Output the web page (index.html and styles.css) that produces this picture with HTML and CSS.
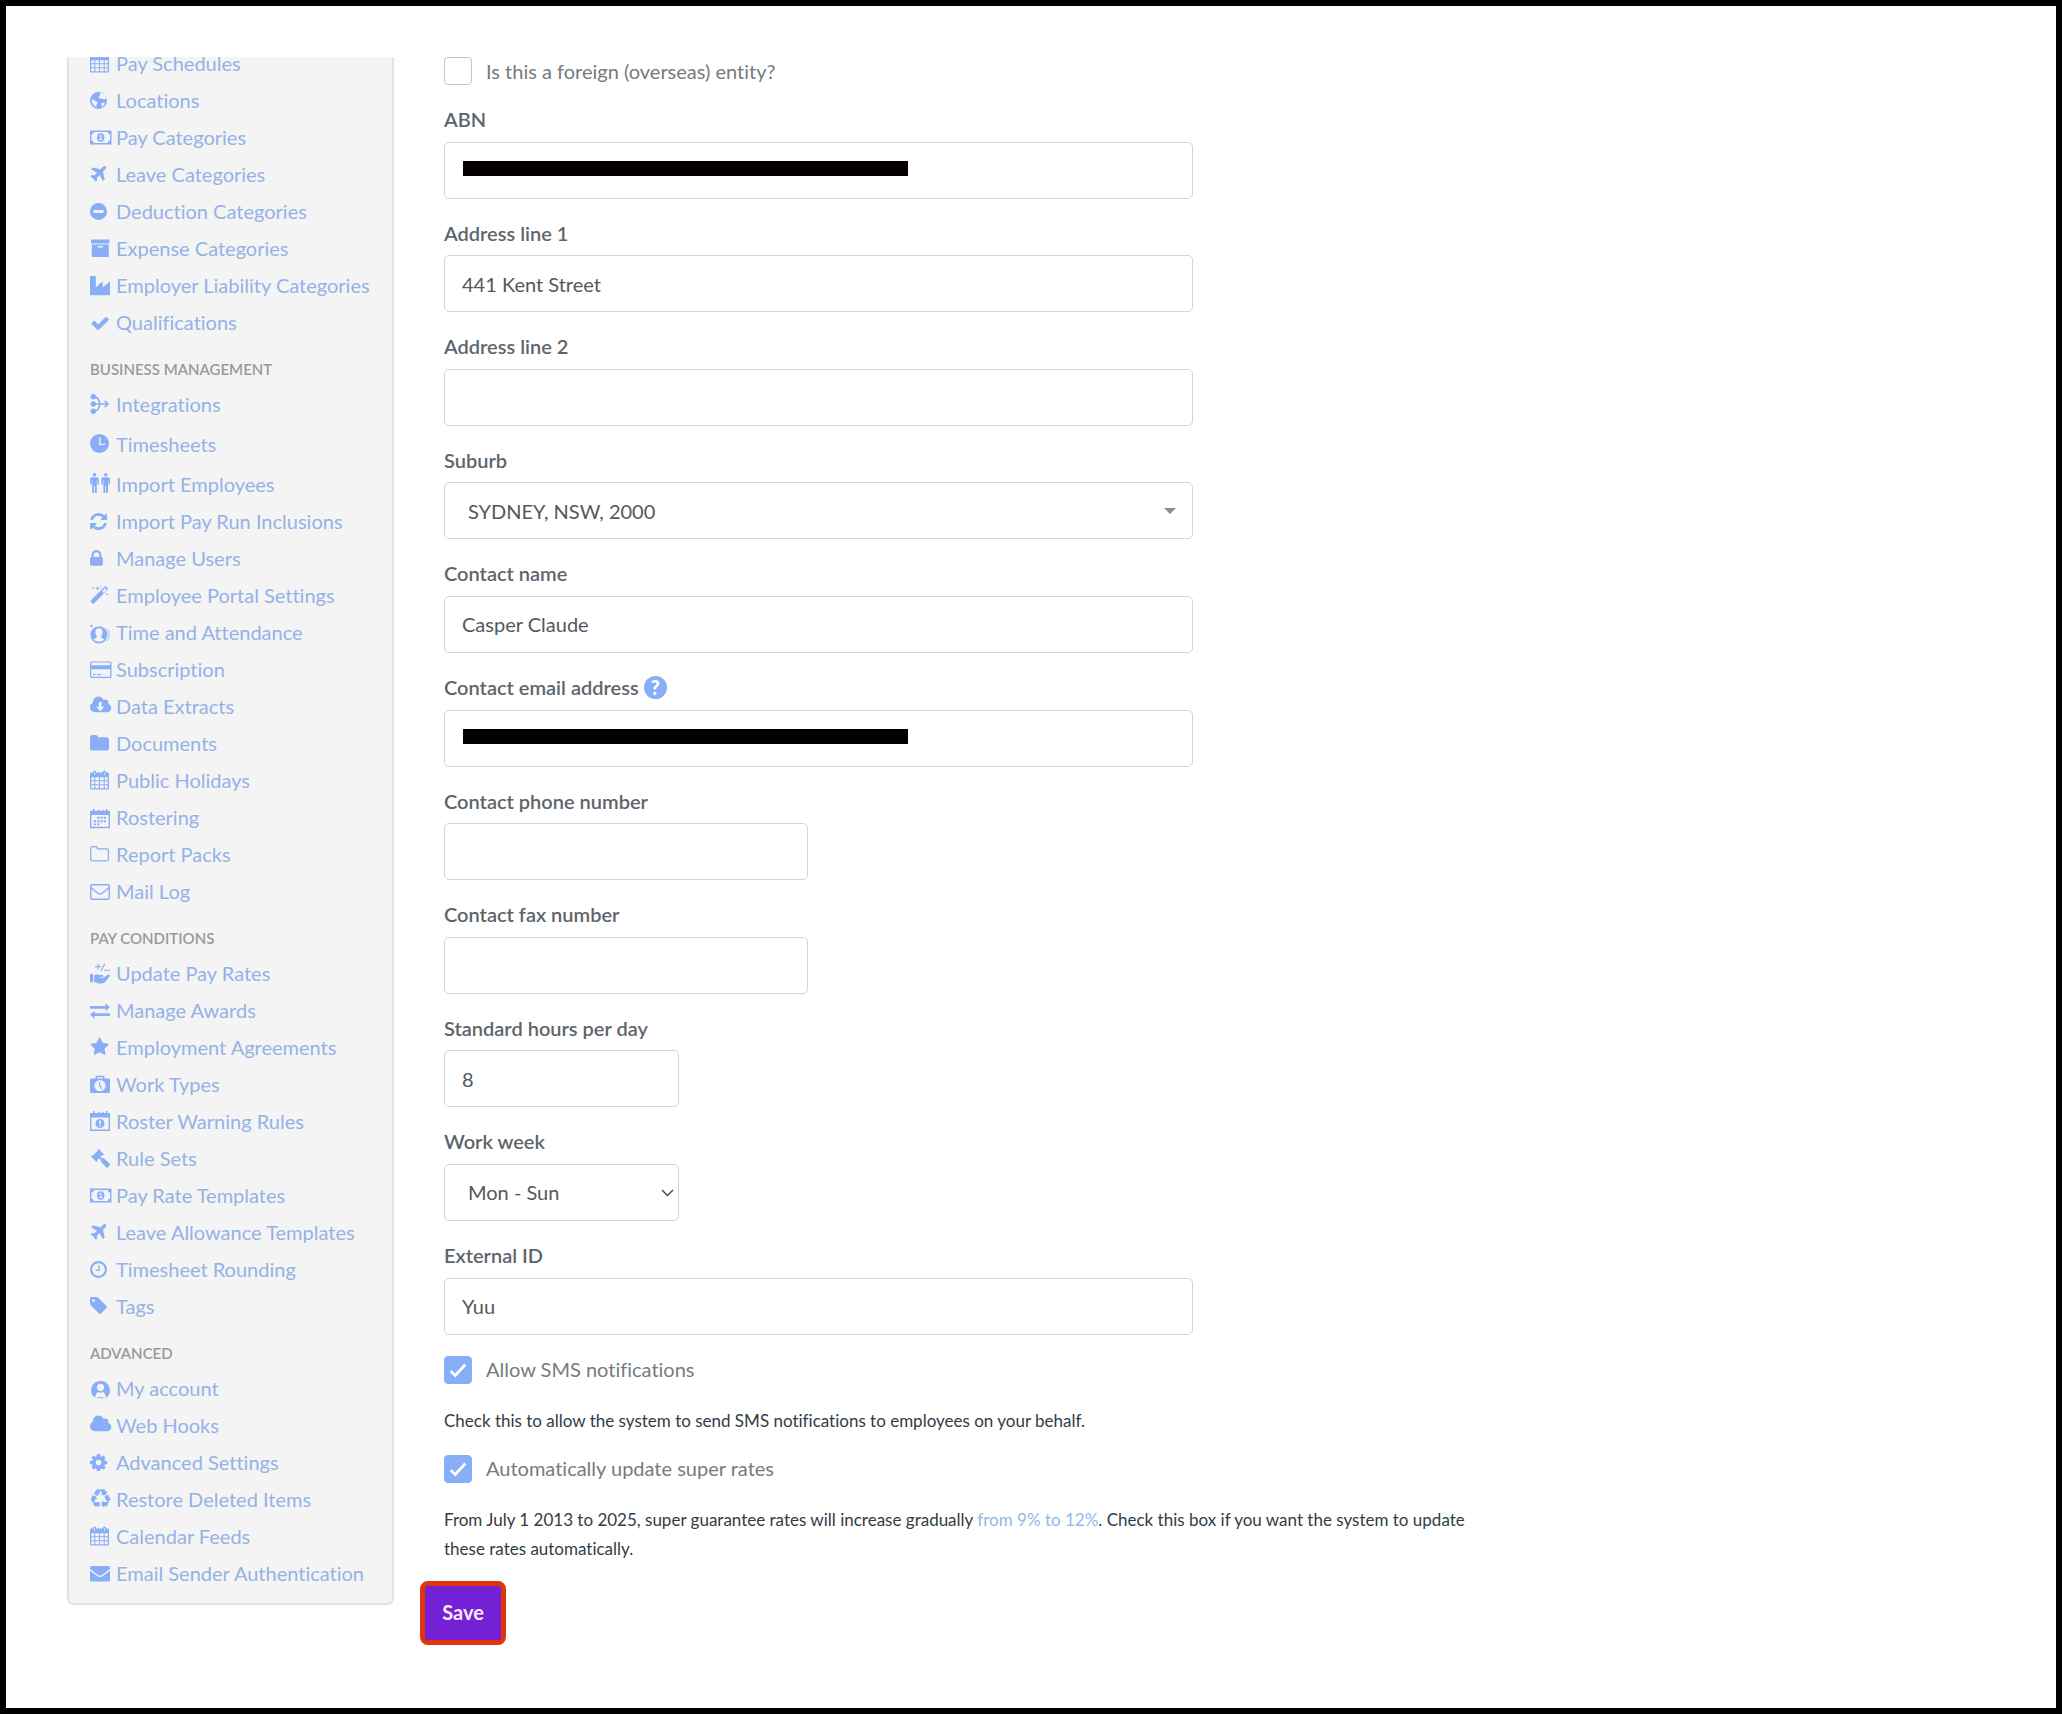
FILE: index.html
```html
<!DOCTYPE html>
<html lang="en">
<head>
    <meta charset="UTF-8">
    <meta name="viewport" content="width=device-width, initial-scale=1.0">
    <title>Business Details</title>
    <link rel="stylesheet" href="styles.css">
</head>
<body>
    <!-- Icon sprite -->
    <svg class="sprite" aria-hidden="true">
        <symbol id="i-calendar" viewBox="0 0 22 20">
            <path fill-rule="evenodd" d="M1.300 1.500H3V1.200a1.600 1.600 0 0 1 3.200 0v.3h6.600V1.200a1.600 1.600 0 0 1 3.200 0v.3h1.500A1.300 1.300 0 0 1 19 2.800v14.400a1.300 1.300 0 0 1-1.300 1.300H1.300A1.300 1.300 0 0 1 0 17.200V2.800A1.300 1.300 0 0 1 1.300 1.500zM1.300 6.300v2.900h3V6.300zm4 0v2.900h3.700V6.300zm4.700 0v2.900h3.700V6.300zm4.700 0v2.900h3V6.300zM1.300 10.200v3h3v-3zm4 0v3h3.700v-3zm4.700 0v3h3.700v-3zm4.700 0v3h3v-3zM1.300 14.200v3h3v-3zm4 0v3h3.700v-3zm4.700 0v3h3.700v-3zm4.700 0v3h3v-3zM4.200 1.200v2.600h.8V1.200zm9.800 0v2.600h.8V1.200z"/>
        </symbol>
        <symbol id="i-globe" viewBox="0 0 22 20">
            <circle cx="8.500" cy="9.500" r="8.500"/>
            <path class="hole" d="M9.500 2.500l2-.6 3.600 2 1.300 3.800-2.600.8-2.600-1.200-2 .4-.6-1.800 1.600-1.200zM2 8.200l1.600.7 2.600 1.300 1.600 1.700-1.300 1.800-.2 2.300-2.600-1.700-1.900-3.300zM11 12.500l2.600-1 1.200 1.300-2.400 3.200z"/>
        </symbol>
        <symbol id="i-money" viewBox="0 0 22 20">
            <path fill-rule="evenodd" d="M0 2.500h21.500v14H0zM3.800 4a2.500 2.500 0 0 1-2.400 2.400v6.200A2.500 2.500 0 0 1 3.800 15h13.900a2.500 2.500 0 0 1 2.400-2.400V6.400A2.500 2.500 0 0 1 17.700 4z"/>
            <ellipse cx="10.700" cy="9.500" rx="3.700" ry="4.300"/>
            <path class="hole" d="M9.300 7.700l1.300-1h.8v4.200h1.100V12H9.200v-1.100h1.100V8l-.6.500z"/>
        </symbol>
        <symbol id="i-plane" viewBox="0 0 22 20">
            <path transform="translate(-1.600 -.4) scale(.0111)" d="M1568 160q44 52 12 148t-108 172l-161 161 160 696q5 19-12 33l-128 96q-7 6-19 6-4 0-7-1-15-3-21-16l-279-508-259 259 53 194q5 17-8 31l-96 96q-9 9-23 9h-2q-15-2-24-13l-189-252-252-189q-11-7-13-23-1-13 9-25l96-97q9-9 23-9 6 0 8 1l194 53 259-259-508-279q-14-8-17-24-2-16 9-27l128-128q14-13 30-8l665 159 160-160q76-76 172-108t148 12z"/>
        </symbol>
        <symbol id="i-minus" viewBox="0 0 22 20">
            <circle cx="8.500" cy="9.500" r="8.500"/>
            <rect class="hole" x="3.500" y="8" width="10" height="3" rx=".6"/>
        </symbol>
        <symbol id="i-archive" viewBox="0 0 22 20">
            <rect x="1" y=".5" width="18.500" height="4" rx=".6"/>
            <path fill-rule="evenodd" d="M1.800 5.500h17v11.800a.7.700 0 0 1-.7.700H2.500a.7.700 0 0 1-.7-.7zM8.300 7a.7.700 0 0 0 0 1.400h4a.7.700 0 0 0 0-1.400z"/>
        </symbol>
        <symbol id="i-industry" viewBox="0 0 22 20">
            <path d="M.6 0h4.600a.6.600 0 0 1 .6.600V11.400l6-5.500a.5.500 0 0 1 .9.400v5.100l6.400-5.500a.5.500 0 0 1 .9.400v12.200a.7.700 0 0 1-.7.700H.6a.6.600 0 0 1-.6-.6V.6A.6.600 0 0 1 .6 0z"/>
        </symbol>
        <symbol id="i-check" viewBox="0 0 22 20">
            <path transform="translate(.2 .2) scale(.0111)" d="M1671 566q0 40-28 68l-724 724-136 136q-28 28-68 28t-68-28l-136-136-362-362q-28-28-28-68t28-68l136-136q28-28 68-28t68 28l294 295 656-657q28-28 68-28t68 28l136 136q28 28 28 68z"/>
        </symbol>
        <symbol id="i-integrations" viewBox="0 0 22 20">
            <circle cx="3.300" cy="1.800" r="2.700"/><circle cx="3.300" cy="9" r="2.700"/><circle cx="3.300" cy="16.300" r="2.700"/>
            <path class="line" stroke-width="1.700" d="M4 1.800c3.500.2 5.300 2.600 5.700 7.200-.4 4.600-2.200 7-5.700 7.200M4 9h13.500M14.700 5.800L18 9l-3.300 3.200"/>
        </symbol>
        <symbol id="i-clock" viewBox="0 0 22 20">
            <circle cx="9.500" cy="8.500" r="9.500"/>
            <path class="hole-line" stroke-width="1.400" d="M9.800 2.500v6.900h5.200"/>
        </symbol>
        <symbol id="i-people" viewBox="0 0 22 20">
            <g id="person">
                <circle cx="4.500" cy="-.2" r="1.800"/>
                <path d="M1.800 2.300h5.400A1.600 1.600 0 0 1 8.800 3.900V9.500H7.200V5H6.800v13H4.900v-7h-.8v7H2.200V5H1.800v4.500H.2V3.900A1.600 1.600 0 0 1 1.800 2.300z"/>
            </g>
            <use href="#person" x="11.200"/>
        </symbol>
        <symbol id="i-refresh" viewBox="0 0 22 20">
            <path transform="translate(-1.400 -.4) scale(.0111)" d="M1639 1056q0 5-1 7-64 268-268 434.500t-478 166.500q-146 0-282.500-55t-243.500-157l-129 129q-19 19-45 19t-45-19-19-45v-448q0-26 19-45t45-19h448q26 0 45 19t19 45-19 45l-137 137q71 66 161 102t187 36q134 0 250-65t186-179q11-17 53-117 8-23 30-23h192q13 0 22.500 9.500t9.500 22.500zm25-800v448q0 26-19 45t-45 19h-448q-26 0-45-19t-19-45 19-45l138-138q-148-137-349-137-134 0-250 65t-186 179q-11 17-53 117-8 23-30 23h-199q-13 0-22.500-9.500t-9.500-22.500v-7q65-268 270-434.500t480-166.500q146 0 284 55.500t245 156.500l130-129q19-19 45-19t45 19 19 45z"/>
        </symbol>
        <symbol id="i-lock" viewBox="0 0 22 20">
            <path transform="translate(-3.500 -.4) scale(.0111)" d="M640 768h512v-192q0-106-75-181t-181-75-181 75-75 181v192zm832 96v576q0 40-28 68t-68 28h-960q-40 0-68-28t-28-68v-576q0-40 28-68t68-28h32v-192q0-184 132-316t316-132 316 132 132 316v192h32q40 0 68 28t28 68z"/>
        </symbol>
        <symbol id="i-wand" viewBox="0 0 22 20">
            <path fill-rule="evenodd" d="M.9 14.600L14.700.5a1 1 0 0 1 1.400 0l1.600 1.600a1 1 0 0 1 0 1.400L3.900 17.400a1 1 0 0 1-1.400 0L.9 16a1 1 0 0 1 0-1.400zM12 5.400l1.500 1.500 3.200-3.300-1.400-1.500z"/>
            <path d="M3 .2l.4 1.300 1.300.4-1.300.4L3 3.600l-.4-1.300-1.300-.4 1.300-.4zM7.500-.2l.6 2 2 .6-2 .6-.6 2-.6-2-2-.6 2-.6zM11-.4l.3 1 1 .3-1 .3-.3 1-.3-1-1-.3 1-.3zM17 6.500l.4 1.200 1.200.4-1.200.4-.4 1.200-.4-1.200-1.200-.4 1.200-.4z"/>
        </symbol>
        <symbol id="i-attendance" viewBox="0 0 22 20">
            <path class="line" stroke-width=".7" d="M16.500 5a9.500 9.500 0 0 1 .6 13"/>
            <circle cx="1.500" cy="3" r="1.200"/>
            <circle cx="9" cy="11.800" r="8.600"/>
            <path class="hole" d="M9 5.300c2.300 0 3.600 1.600 3.600 4 0 1.700-.6 3-1.300 3.700v1.700l3.200 1.500A7.200 7.200 0 0 1 9 19a7.200 7.200 0 0 1-5.500-2.800l3.200-1.500V13c-.7-.7-1.300-2-1.300-3.700 0-2.400 1.300-4 3.600-4z"/>
        </symbol>
        <symbol id="i-card" viewBox="0 0 22 20">
            <path fill-rule="evenodd" d="M1.500 1.500H20A1.500 1.500 0 0 1 21.500 3v13.500A1.500 1.500 0 0 1 20 18H1.500A1.500 1.500 0 0 1 0 16.500V3a1.500 1.500 0 0 1 1.500-1.500zM1.200 3v2.200h19V3c0-.3-.2-.5-.5-.5h-18c-.3 0-.5.2-.5.500zm0 6.300v7c0 .3.200.5.500.5h18c.3 0 .5-.2.500-.5v-7z"/>
            <path d="M3 14h2.500v1.300H3zM7 14h4.200v1.300H7z"/>
        </symbol>
        <symbol id="i-cloud" viewBox="0 0 22 20">
            <path transform="translate(.7 -1.800) scale(.0111)" d="M1856 1152q0 159-112.500 271.500t-271.500 112.500h-1088q-185 0-316.500-131.500t-131.500-316.500q0-132 71-241.500t187-163.500q-2-28-2-43 0-212 150-362t362-150q158 0 286.500 88t187.500 230q70-62 166-62 106 0 181 75t75 181q0 75-41 138 129 30 213 134.500t84 239.500z"/>
        </symbol>
        <symbol id="i-cloud-download" viewBox="0 0 22 20">
            <use href="#i-cloud" width="22" height="20"/>
            <path class="hole" d="M8.900 5h2.600v4.800h2.700L10.200 14.200 6.200 9.800h2.700z"/>
        </symbol>
        <symbol id="i-folder" viewBox="0 0 22 20">
            <path d="M2.300 1H5.800A2.300 2.300 0 0 1 8.100 3.200h8.500A2.400 2.400 0 0 1 19 5.500v8.700a2.300 2.300 0 0 1-2.300 2.300H2.300A2.300 2.300 0 0 1 0 14.200V3.300A2.300 2.300 0 0 1 2.300 1z"/>
        </symbol>
        <symbol id="i-roster" viewBox="0 0 22 20">
            <path fill-rule="evenodd" d="M0 2.800h3V1h1.600v1.800h3.500V1.800h1.300v1h3.300V1.800h1.200v1h2V1h1.500v1.800H20v17.400H0zM1.400 7v11.800h17.200V7z"/>
            <path d="M7.200 8.700h2.200v2H7.200zM10.500 8.700h2.200v2h-2.200zM13.800 8.700H16v2h-2.200zM3.800 12.200H6v2H3.800zM7.200 12.200h2.200v2H7.200zM10.500 12.200h2.200v2h-2.200zM13.800 12.200H16v2h-2.200zM3.800 15.500H6v1.800H3.800zM7.200 15.500h2.200v1.800H7.200z"/>
        </symbol>
        <symbol id="i-folder-o" viewBox="0 0 22 20">
            <path class="line" stroke-width="1.300" d="M2.500 1.600H5.600A1.800 1.800 0 0 1 7.400 3.400v.5h9.200a1.800 1.800 0 0 1 1.800 1.800v8.400a1.800 1.800 0 0 1-1.800 1.800H2.500a1.800 1.800 0 0 1-1.800-1.800V3.400a1.800 1.800 0 0 1 1.800-1.800z"/>
        </symbol>
        <symbol id="i-envelope-o" viewBox="0 0 22 20">
            <rect class="line" stroke-width="1.400" x=".7" y="2.700" width="18.600" height="14.600" rx="1.300"/>
            <path class="line" stroke-width="1.400" d="M1 5.500c3 2.800 5.500 4.700 7.300 6 1.300.9 2.100.9 3.400 0 1.800-1.300 4.300-3.200 7.300-6"/>
        </symbol>
        <symbol id="i-hand" viewBox="0 0 22 20">
            <path d="M0 10h3.200v8.200H0zM4.200 11.300c1.700-1.300 3.600-1.500 5-.3h3.300c1.300 0 1.300 2 0 2H9.600v.7h3.700l4.500-2.900c1.400-.8 2.600.8 1.600 1.900l-4 5c-.9 1.100-2 1.700-3.400 1.700H8.500c-1.500 0-2.500-1.300-4.300-1.300z"/>
            <path class="line" stroke-width="1.100" d="M5 2.600h6M8-.4v6M14.800-.3l-4 7.600M14 6.200h6"/>
        </symbol>
        <symbol id="i-exchange" viewBox="0 0 22 20">
            <path d="M0 5h15.500V2.300L20 6.300l-4.500 4V7.700H0zM20 12.300H4.500V9.700L0 13.700l4.500 4V15H20z"/>
        </symbol>
        <symbol id="i-star" viewBox="0 0 22 20">
            <path transform="translate(-.3 -1) scale(.0111)" d="M1728 647q0 22-26 48l-363 354 86 500q1 7 1 20 0 21-10.500 35.500t-30.500 14.500q-19 0-40-12l-449-236-449 236q-22 12-40 12-21 0-31.500-14.500t-10.500-35.500q0-6 2-20l86-500-364-354q-25-27-25-48 0-37 56-46l502-73 225-455q19-41 49-41t49 41l225 455 502 73q56 9 56 46z"/>
        </symbol>
        <symbol id="i-worktype" viewBox="0 0 22 20">
            <path fill-rule="evenodd" d="M5.500 3.500V2A1.300 1.300 0 0 1 6.800.8h6.400A1.300 1.300 0 0 1 14.500 2v1.500h4A1.500 1.500 0 0 1 20 5v11.500a1.500 1.500 0 0 1-1.500 1.500h-17A1.500 1.500 0 0 1 0 16.500V5a1.500 1.500 0 0 1 1.500-1.500zM7 3.500h6V2.200H7z"/>
            <circle class="hole" cx="10" cy="10.700" r="5.600"/>
            <path class="line" stroke-width="1.200" d="M9.600 6.700v4.200l2.400 2.900"/>
        </symbol>
        <symbol id="i-warning" viewBox="0 0 22 20">
            <path fill-rule="evenodd" d="M0 1h3v-2h1.600v2h3.500V0h1.300v1h3.300V0h1.200v1h2v-2h1.500v2H20v18H0zM1.400 5.500v12.100h17.200V5.500z"/>
            <circle cx="10" cy="11.500" r="4.500"/>
            <path class="hole" d="M9.200 8.600h1.600v3.600H9.200zM9.200 13h1.600v1.500H9.200z"/>
        </symbol>
        <symbol id="i-gavel" viewBox="0 0 22 20">
            <path d="M8.500-.2l5.500 5.500-1.200 1.200-.6-.4-1.700 1.700 2 2 1.300-.8 5.700 5.500a1.600 1.600 0 0 1 0 2.300l-1.200 1.300a1.600 1.600 0 0 1-2.300 0L10.600 12.600l.5-1.300-2-2-1.900 1.900.4.600-1.200 1.200L.9 7.500l1.200-1.200.7.400L8 1.500l-.6-.6z"/>
        </symbol>
        <symbol id="i-clock-o" viewBox="0 0 22 20">
            <circle class="line" stroke-width="2.200" cx="8.500" cy="9.500" r="7.400"/>
            <path class="line" stroke-width="1.300" d="M9 5.200v5.200H5.600"/>
        </symbol>
        <symbol id="i-tag" viewBox="0 0 22 20">
            <path transform="translate(-1.400 -1.400) scale(.0111)" d="M576 448q0-53-37.500-90.500t-90.500-37.500-90.500 37.500-37.500 90.500 37.500 90.500 90.500 37.500 90.500-37.500 37.500-90.500zm1067 576q0 53-37 90l-491 492q-39 37-91 37-53 0-90-37l-715-716q-38-37-64.500-101t-26.500-117v-416q0-52 38-90t90-38h416q53 0 117 26.500t102 64.500l715 714q37 39 37 91z"/>
        </symbol>
        <symbol id="i-account" viewBox="0 0 22 20">
            <path d="M10.500 2a9.300 9.300 0 0 1 7.500 15 9 9 0 0 1-2.700 2.300H5.700A9.300 9.300 0 0 1 10.500 2z"/>
            <circle class="hole" cx="10.500" cy="8.300" r="3.600"/>
            <path class="hole" d="M5.200 19.500c0-3.800 1-5.600 3-6.500 1.500 1 3.100 1 4.600 0 2 .9 3 2.700 3 6.500h-2.200v-1.300H7.400v1.300z"/>
        </symbol>
        <symbol id="i-cog" viewBox="0 0 22 20">
            <path transform="translate(-1.400 -.4) scale(.0111)" d="M1152 896q0-106-75-181t-181-75-181 75-75 181 75 181 181 75 181-75 75-181zm512-109v222q0 12-8 23t-20 13l-185 28q-19 54-39 91 35 50 107 138 10 12 10 25t-9 23q-27 37-99 108t-94 71q-12 0-26-9l-138-108q-44 23-91 38-16 136-29 186-7 28-36 28h-222q-14 0-24.500-8.500t-11.500-21.500l-28-184q-49-16-90-37l-141 107q-10 9-25 9-14 0-25-11-126-114-165-168-7-10-7-23 0-12 8-23 15-21 51-66.500t54-70.500q-27-50-41-99l-183-27q-13-2-21-12.500t-8-23.500v-222q0-12 8-23t19-13l186-28q14-46 39-92-40-57-107-138-10-12-10-24 0-10 9-23 26-36 98.500-107.500t94.500-71.500q13 0 26 10l138 107q44-23 91-38 16-136 29-186 7-28 36-28h222q14 0 24.500 8.500t11.500 21.500l28 184q49 16 90 37l142-107q9-9 24-9 13 0 25 10 129 119 165 170 7 8 7 22 0 12-8 23-15 21-51 66.500t-54 70.500q26 50 41 98l183 28q13 2 21 12.500t8 23.500z"/>
        </symbol>
        <symbol id="i-recycle" viewBox="0 0 22 20">
            <path transform="translate(.6 -.8) scale(.0111)" d="M836 1169l-15 368-2 22-420-29q-36-3-67-31.500t-47-65.500q-11-27-14.500-55t4-65 12-55 21.500-64 19-53q78 12 509 28zm-387-586l180 379-147-92q-63 72-111.500 144.500t-72.500 125-39.500 94.500-18.500 63l-4 21-190-357q-17-26-18-56t6-47l8-18q35-63 114-188l-140-86zm1231 517l-188 359q-12 29-36.500 46.500t-43.500 20.500l-18 4q-71 7-219 12l8 164-230-367 211-362 7 173q170 16 283 5t170-33zm-785-924q-47 63-265 435l-317-187-19-12 225-356q20-31 60-45t80-10q24 2 48.500 12t42 21 41.500 33 36 34.500 36 39.500 32 35zm655 307l212 363q18 37 12.500 76t-27.500 74q-13 20-33 37t-38 28-48.500 22-47 16-51.500 14-46 12q-34-72-265-436l313-195zm-143-226l142-83-220 373-419-20 151-86q-34-89-75-166t-75.500-123.500-64.500-80-47-46.500l-17-13 405 1q31-3 58 10.500t39 28.500l11 15q39 61 112 190z"/>
        </symbol>
        <symbol id="i-envelope" viewBox="0 0 22 20">
            <rect y="2" width="20" height="15.500" rx="1.500"/>
            <path class="hole-line" stroke-width="1.400" d="M-.2 5.500c3.200 3 6 4.900 8 6.200 1.600.9 2.800.9 4.400 0 2-1.300 4.800-3.200 8-6.200"/>
        </symbol>
    </svg>

    <div class="page">
        <nav class="sidebar" aria-label="Payroll settings">
            <ul class="menu">
                <li><a href="#"><svg class="icon"><use href="#i-calendar"/></svg>Pay Schedules</a></li>
                <li><a href="#"><svg class="icon"><use href="#i-globe"/></svg>Locations</a></li>
                <li><a href="#"><svg class="icon"><use href="#i-money"/></svg>Pay Categories</a></li>
                <li><a href="#"><svg class="icon"><use href="#i-plane"/></svg>Leave Categories</a></li>
                <li><a href="#"><svg class="icon"><use href="#i-minus"/></svg>Deduction Categories</a></li>
                <li><a href="#"><svg class="icon"><use href="#i-archive"/></svg>Expense Categories</a></li>
                <li><a href="#"><svg class="icon"><use href="#i-industry"/></svg>Employer Liability Categories</a></li>
                <li><a href="#"><svg class="icon"><use href="#i-check"/></svg>Qualifications</a></li>
            </ul>
            <h2>BUSINESS MANAGEMENT</h2>
            <ul class="menu">
                <li><a href="#"><svg class="icon"><use href="#i-integrations"/></svg>Integrations</a></li>
                <li class="tall"><a href="#"><svg class="icon"><use href="#i-clock"/></svg>Timesheets</a></li>
                <li><a href="#"><svg class="icon"><use href="#i-people"/></svg>Import Employees</a></li>
                <li><a href="#"><svg class="icon"><use href="#i-refresh"/></svg>Import Pay Run Inclusions</a></li>
                <li><a href="#"><svg class="icon"><use href="#i-lock"/></svg>Manage Users</a></li>
                <li><a href="#"><svg class="icon"><use href="#i-wand"/></svg>Employee Portal Settings</a></li>
                <li><a href="#"><svg class="icon"><use href="#i-attendance"/></svg>Time and Attendance</a></li>
                <li><a href="#"><svg class="icon"><use href="#i-card"/></svg>Subscription</a></li>
                <li><a href="#"><svg class="icon"><use href="#i-cloud-download"/></svg>Data Extracts</a></li>
                <li><a href="#"><svg class="icon"><use href="#i-folder"/></svg>Documents</a></li>
                <li><a href="#"><svg class="icon"><use href="#i-calendar"/></svg>Public Holidays</a></li>
                <li><a href="#"><svg class="icon"><use href="#i-roster"/></svg>Rostering</a></li>
                <li><a href="#"><svg class="icon"><use href="#i-folder-o"/></svg>Report Packs</a></li>
                <li><a href="#"><svg class="icon"><use href="#i-envelope-o"/></svg>Mail Log</a></li>
            </ul>
            <h2>PAY CONDITIONS</h2>
            <ul class="menu">
                <li><a href="#"><svg class="icon"><use href="#i-hand"/></svg>Update Pay Rates</a></li>
                <li><a href="#"><svg class="icon"><use href="#i-exchange"/></svg>Manage Awards</a></li>
                <li><a href="#"><svg class="icon"><use href="#i-star"/></svg>Employment Agreements</a></li>
                <li><a href="#"><svg class="icon"><use href="#i-worktype"/></svg>Work Types</a></li>
                <li><a href="#"><svg class="icon"><use href="#i-warning"/></svg>Roster Warning Rules</a></li>
                <li><a href="#"><svg class="icon"><use href="#i-gavel"/></svg>Rule Sets</a></li>
                <li><a href="#"><svg class="icon"><use href="#i-money"/></svg>Pay Rate Templates</a></li>
                <li><a href="#"><svg class="icon"><use href="#i-plane"/></svg>Leave Allowance Templates</a></li>
                <li><a href="#"><svg class="icon"><use href="#i-clock-o"/></svg>Timesheet Rounding</a></li>
                <li><a href="#"><svg class="icon"><use href="#i-tag"/></svg>Tags</a></li>
            </ul>
            <h2>ADVANCED</h2>
            <ul class="menu">
                <li><a href="#"><svg class="icon"><use href="#i-account"/></svg>My account</a></li>
                <li><a href="#"><svg class="icon"><use href="#i-cloud"/></svg>Web Hooks</a></li>
                <li><a href="#"><svg class="icon"><use href="#i-cog"/></svg>Advanced Settings</a></li>
                <li><a href="#"><svg class="icon"><use href="#i-recycle"/></svg>Restore Deleted Items</a></li>
                <li><a href="#"><svg class="icon"><use href="#i-calendar"/></svg>Calendar Feeds</a></li>
                <li><a href="#"><svg class="icon"><use href="#i-envelope"/></svg>Email Sender Authentication</a></li>
            </ul>
        </nav>

        <form class="details" onsubmit="return false;">
            <div class="fields">
                <div class="check-row">
                    <input type="checkbox" id="foreign">
                    <label for="foreign">Is this a foreign (overseas) entity?</label>
                </div>

                <div class="field">
                    <label for="abn">ABN</label>
                    <div class="control">
                        <input type="text" id="abn">
                        <span class="redacted"></span>
                    </div>
                </div>
                <div class="field">
                    <label for="address1">Address line 1</label>
                    <input type="text" id="address1" value="441 Kent Street">
                </div>
                <div class="field">
                    <label for="address2">Address line 2</label>
                    <input type="text" id="address2">
                </div>
                <div class="field">
                    <label for="suburb">Suburb</label>
                    <div class="control">
                        <select id="suburb">
                            <option>SYDNEY, NSW, 2000</option>
                        </select>
                        <svg class="caret" viewBox="0 0 12 6"><path d="M0 0h12L6 6z"/></svg>
                    </div>
                </div>
                <div class="field">
                    <label for="contactName">Contact name</label>
                    <input type="text" id="contactName" value="Casper Claude">
                </div>
                <div class="field">
                    <div class="label-row">
                        <label for="email">Contact email address</label>
                        <button type="button" class="help" aria-label="Help">?</button>
                    </div>
                    <div class="control">
                        <input type="text" id="email">
                        <span class="redacted"></span>
                    </div>
                </div>
                <div class="field medium">
                    <label for="phone">Contact phone number</label>
                    <input type="text" id="phone">
                </div>
                <div class="field medium">
                    <label for="fax">Contact fax number</label>
                    <input type="text" id="fax">
                </div>
                <div class="field small">
                    <label for="hours">Standard hours per day</label>
                    <input type="text" id="hours" value="8">
                </div>
                <div class="field small">
                    <label for="workWeek">Work week</label>
                    <div class="control">
                        <select id="workWeek">
                            <option>Mon - Sun</option>
                        </select>
                        <svg class="chevron" viewBox="0 0 13 8"><path d="M1 1l5.500 5.500L12 1"/></svg>
                    </div>
                </div>
                <div class="field">
                    <label for="externalId">External ID</label>
                    <input type="text" id="externalId" value="Yuu">
                </div>

                <div class="check-row">
                    <input type="checkbox" id="sms" checked>
                    <label for="sms">Allow SMS notifications</label>
                </div>
                <p>Check this to allow the system to send SMS notifications to employees on your behalf.</p>

                <div class="check-row">
                    <input type="checkbox" id="superRates" checked>
                    <label for="superRates">Automatically update super rates</label>
                </div>
                <p>From July 1 2013 to 2025, super guarantee rates will increase gradually <a href="#">from 9% to 12%</a>. Check this box if you want the system to update these rates automatically.</p>
            </div>
            <button type="submit" class="save">Save</button>
        </form>
    </div>
</body>
</html>
```
FILE: styles.css
```css
* {
    box-sizing: border-box;
}

body {
    margin: 0;
    min-height: 100vh;
    border: 6px solid #000;
    background-color: #fff;
    font-family: Lato, "Open Sans", sans-serif;
    font-size: 20px;
    font-variant-ligatures: none;
    line-height: 1.33;
}

.sprite {
    display: none;
}

.page {
    display: flex;
    align-items: flex-start;
    gap: 26px;
    padding: 51px 61px;
}

/* Sidebar */
.sidebar {
    flex: 0 0 327px;
    overflow: hidden;
    padding: 0 0 11px 21px;
    border: 2px solid #e2e3e4;
    border-top: none;
    border-radius: 0 0 6px 6px;
    background-color: #f4f4f4;
}

.menu {
    list-style: none;
    margin: 0;
    padding: 0;
}

.menu:first-child {
    margin-top: -12px;
}

.menu a {
    display: flex;
    align-items: center;
    height: 37px;
    color: #94b2e6;
    white-space: nowrap;
    text-decoration: none;
}

.menu .tall a {
    height: 43px;
}

.menu a:hover {
    text-decoration: underline;
}

.sidebar h2 {
    margin: 0;
    padding: 19px 0 7px;
    color: #999;
    font-size: 15px;
    font-weight: 600;
    line-height: 19px;
}

.icon {
    flex: none;
    width: 22px;
    height: 20px;
    margin-right: 4px;
    overflow: visible;
    fill: #87aef6;
}

symbol {
    overflow: visible;
}

.line {
    fill: none;
    stroke: #87aef6;
}

.hole {
    fill: #f4f4f4;
}

.hole-line {
    fill: none;
    stroke: #f4f4f4;
}

/* Form */
.details {
    flex: 0 1 1064px;
}

.fields {
    padding-left: 24px;
}

.field {
    max-width: 749px;
    margin: 21px 0;
}

.medium {
    max-width: 364px;
}

.small {
    max-width: 235px;
}

.field label {
    display: block;
    margin-bottom: 9px;
    color: #5d656b;
    font-weight: 600;
}

.label-row {
    display: flex;
    align-items: flex-start;
    gap: 5px;
}

.help {
    width: 23px;
    height: 23px;
    margin: 2px 0 0;
    padding: 0;
    border: none;
    border-radius: 50%;
    background-color: #87aef6;
    color: #fff;
    font: 900 20px/23px Lato, sans-serif;
    cursor: pointer;
}

.control {
    position: relative;
}

input[type="text"],
select {
    display: block;
    width: 100%;
    height: 57px;
    margin: 0;
    padding: 0 17px;
    border: 1px solid #d0d5d8;
    border-radius: 5px;
    background-color: #fff;
    color: #55585a;
    font: inherit;
    font-variant-ligatures: none;
}

select {
    padding: 0 23px;
    appearance: none;
}

input[type="text"]:focus,
select:focus {
    border-color: #87aef6;
    outline: none;
}

.redacted {
    position: absolute;
    top: 19px;
    left: 19px;
    width: 445px;
    max-width: 90%;
    height: 15px;
    background-color: #050000;
}

.caret {
    position: absolute;
    top: 26px;
    right: 17px;
    width: 12px;
    height: 6px;
    fill: #8c8c8c;
    pointer-events: none;
}

.chevron {
    position: absolute;
    top: 25px;
    right: 5px;
    width: 13px;
    height: 8px;
    fill: none;
    stroke: #444;
    stroke-width: 1.4;
    pointer-events: none;
}

.check-row {
    display: flex;
    align-items: center;
    gap: 14px;
    height: 28px;
    color: #757b80;
}

.check-row input {
    appearance: none;
    width: 28px;
    height: 28px;
    margin: 0;
    border: 1px solid #c0c5ce;
    border-radius: 4px;
    background-color: #fff;
}

.check-row input:checked {
    border-color: #87aef6;
    background: #87aef6 url("data:image/svg+xml,%3Csvg xmlns='http://www.w3.org/2000/svg' viewBox='0 0 24 24'%3E%3Cpath d='M4 13l5 5L20 6' fill='none' stroke='white' stroke-width='3'/%3E%3C/svg%3E") center / 22px no-repeat;
}

.fields p {
    margin: 22px 0 20px;
    color: #323c44;
    font-size: 17px;
    line-height: 29px;
}

.fields p:last-child {
    margin-bottom: 18px;
}

.fields p a {
    color: #93b7e6;
    text-decoration: none;
}

.save {
    width: 86px;
    height: 64px;
    padding: 0;
    border: 5px solid #e0340c;
    border-radius: 8px;
    background-color: #7420d4;
    color: #fbe9ff;
    font: inherit;
    font-weight: 700;
    cursor: pointer;
}
```
